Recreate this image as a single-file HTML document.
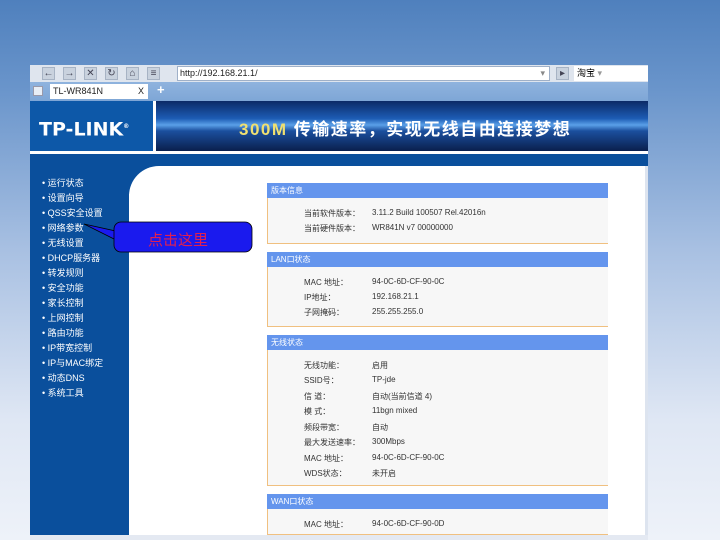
<!DOCTYPE html>
<html><head><meta charset="utf-8"><style>
*{margin:0;padding:0;box-sizing:border-box}
body{width:720px;height:540px;overflow:hidden;position:relative;font-family:"Liberation Sans","Noto Sans CJK SC",sans-serif;background:linear-gradient(180deg,#4f80bd 0px,#6a95cb 90px,#a8c0e2 250px,#dfe7f4 420px,#eef2f9 540px)}
.abs{position:absolute}
.win{left:30px;top:65px;width:618px;height:475px;background:#fff}
.tb{left:30px;top:65px;width:618px;height:17px;background:#dfe5ee}
.btn{top:67px;width:13px;height:13px;background:#c9d2de;border:1px solid #a7b3c4;font-size:10px;line-height:11px;text-align:center;color:#445}
.url{left:177px;top:66px;width:373px;height:15px;background:#fff;border:1px solid #9fb0c8;font-size:9px;line-height:13px;padding-left:2px;color:#222}
.tabs{left:30px;top:82px;width:618px;height:19px;background:linear-gradient(#8fb3de,#7ea6d6)}
.tab{left:50px;top:84px;width:98px;height:15px;background:#fff;font-size:9px;line-height:15px;padding-left:3px;color:#222}
.logo{left:30px;top:101px;width:123px;height:50px;background:#0d58a8;color:#fff;font-weight:bold;font-size:19px;line-height:52px;padding-left:9px;letter-spacing:0px;font-family:"DejaVu Sans","Liberation Sans",sans-serif}
.ban{left:156px;top:101px;width:492px;height:50px;background:linear-gradient(180deg,#0b2a66 0%,#1d5cb4 35%,#5aa0e8 48%,#1b4f9e 60%,#0a1f4d 100%)}
.bt{left:239px;top:115px;font-size:17px;font-weight:bold;color:#fff;letter-spacing:1.5px}
.side{left:30px;top:154px;width:99px;height:381px;background:#0a4f9c}
.band{left:129px;top:154px;width:519px;height:12px;background:#0a4f9c}
.content{left:129px;top:166px;width:519px;height:369px;background:#fff;border-top-left-radius:30px}
.cor{left:129px;top:154px;width:40px;height:40px;background:#0a4f9c}
.nav{left:42px;font-size:9px;color:#fff;white-space:nowrap}
.ph{left:267px;width:341px;height:15px;background:#6495ed;color:#fff;font-size:8px;line-height:15px;padding-left:4px}
.pb{left:267px;width:341px;background:#f7f7f7;border-left:1px solid #f0c080;border-bottom:1px solid #f0c080}
.r{font-size:8px;color:#333;white-space:nowrap}
.bot{left:30px;top:535px;width:618px;height:5px;background:#e4e9f2}
</style></head><body>
<div class="abs win"></div>
<div class="abs tb"></div>
<div class="abs btn" style="left:42px">←</div>
<div class="abs btn" style="left:63px">→</div>
<div class="abs btn" style="left:84px">✕</div>
<div class="abs btn" style="left:105px">↻</div>
<div class="abs btn" style="left:126px">⌂</div>
<div class="abs btn" style="left:147px">≡</div>
<div class="abs url">http://192.168.21.1/<span style="position:absolute;right:4px;color:#888">▾</span></div>
<div class="abs btn" style="left:556px">▸</div>
<div class="abs" style="left:574px;top:66px;width:74px;height:15px;background:#fff;font-size:9px;line-height:15px;padding-left:3px">淘宝 <span style="color:#999">▾</span></div>
<div class="abs tabs"></div>
<div class="abs" style="left:33px;top:86px;width:10px;height:10px;background:#e8eef6;border:1px solid #99a"></div>
<div class="abs tab">TL-WR841N<span style="position:absolute;right:4px">X</span></div>
<div class="abs" style="left:157px;top:82px;color:#fff;font-size:13px;font-weight:bold">+</div>
<div class="abs logo">TP-LINK<sup style="font-size:6px">®</sup></div>
<div class="abs" style="left:153px;top:101px;width:3px;height:50px;background:#fff"></div>
<div class="abs ban"></div>
<div class="abs bt"><span style="color:#f0e070">300M</span> 传输速率，实现无线自由连接梦想</div>
<div class="abs" style="left:30px;top:151px;width:618px;height:3px;background:#fff"></div>
<div class="abs side"></div>
<div class="abs cor"></div>
<div class="abs band"></div>
<div class="abs content"></div>
<div class="abs nav" style="top:176px">• 运行状态</div>
<div class="abs nav" style="top:191px">• 设置向导</div>
<div class="abs nav" style="top:206px">• QSS安全设置</div>
<div class="abs nav" style="top:221px">• 网络参数</div>
<div class="abs nav" style="top:236px">• 无线设置</div>
<div class="abs nav" style="top:251px">• DHCP服务器</div>
<div class="abs nav" style="top:266px">• 转发规则</div>
<div class="abs nav" style="top:281px">• 安全功能</div>
<div class="abs nav" style="top:296px">• 家长控制</div>
<div class="abs nav" style="top:311px">• 上网控制</div>
<div class="abs nav" style="top:326px">• 路由功能</div>
<div class="abs nav" style="top:341px">• IP带宽控制</div>
<div class="abs nav" style="top:356px">• IP与MAC绑定</div>
<div class="abs nav" style="top:371px">• 动态DNS</div>
<div class="abs nav" style="top:386px">• 系统工具</div>
<svg class="abs" style="left:80px;top:218px" width="180" height="40"><path d="M4 6 L40 14 L40 24 Z" fill="#1a1aee" stroke="#000" stroke-width="0.8"/><rect x="34" y="4" width="138" height="30" rx="7" fill="#1a1aee" stroke="#000" stroke-width="0.8"/></svg>
<div class="abs" style="left:148px;top:229px;color:#e02050;font-size:15px">点击这里</div>
<div class="abs ph" style="top:183px">版本信息</div>
<div class="abs pb" style="top:198px;height:46px"></div>
<div class="abs r" style="left:304px;top:208px">当前软件版本：</div><div class="abs r" style="left:372px;top:208px">3.11.2 Build 100507 Rel.42016n</div>
<div class="abs r" style="left:304px;top:223px">当前硬件版本：</div><div class="abs r" style="left:372px;top:223px">WR841N v7 00000000</div>
<div class="abs ph" style="top:252px">LAN口状态</div>
<div class="abs pb" style="top:267px;height:60px"></div>
<div class="abs r" style="left:304px;top:277px">MAC 地址：</div><div class="abs r" style="left:372px;top:277px">94-0C-6D-CF-90-0C</div>
<div class="abs r" style="left:304px;top:292px">IP地址：</div><div class="abs r" style="left:372px;top:292px">192.168.21.1</div>
<div class="abs r" style="left:304px;top:307px">子网掩码：</div><div class="abs r" style="left:372px;top:307px">255.255.255.0</div>
<div class="abs ph" style="top:335px">无线状态</div>
<div class="abs pb" style="top:350px;height:136px"></div>
<div class="abs r" style="left:304px;top:360px">无线功能：</div><div class="abs r" style="left:372px;top:360px">启用</div>
<div class="abs r" style="left:304px;top:375px">SSID号：</div><div class="abs r" style="left:372px;top:375px">TP-jde</div>
<div class="abs r" style="left:304px;top:391px">信 道：</div><div class="abs r" style="left:372px;top:391px">自动(当前信道 4)</div>
<div class="abs r" style="left:304px;top:406px">模 式：</div><div class="abs r" style="left:372px;top:406px">11bgn mixed</div>
<div class="abs r" style="left:304px;top:422px">频段带宽：</div><div class="abs r" style="left:372px;top:422px">自动</div>
<div class="abs r" style="left:304px;top:437px">最大发送速率：</div><div class="abs r" style="left:372px;top:437px">300Mbps</div>
<div class="abs r" style="left:304px;top:453px">MAC 地址：</div><div class="abs r" style="left:372px;top:453px">94-0C-6D-CF-90-0C</div>
<div class="abs r" style="left:304px;top:468px">WDS状态：</div><div class="abs r" style="left:372px;top:468px">未开启</div>
<div class="abs ph" style="top:494px">WAN口状态</div>
<div class="abs pb" style="top:509px;height:26px"></div>
<div class="abs r" style="left:304px;top:519px">MAC 地址：</div><div class="abs r" style="left:372px;top:519px">94-0C-6D-CF-90-0D</div>
<div class="abs" style="left:645px;top:166px;width:3px;height:369px;background:#dde4ef"></div>
<div class="abs bot"></div>
</body></html>
